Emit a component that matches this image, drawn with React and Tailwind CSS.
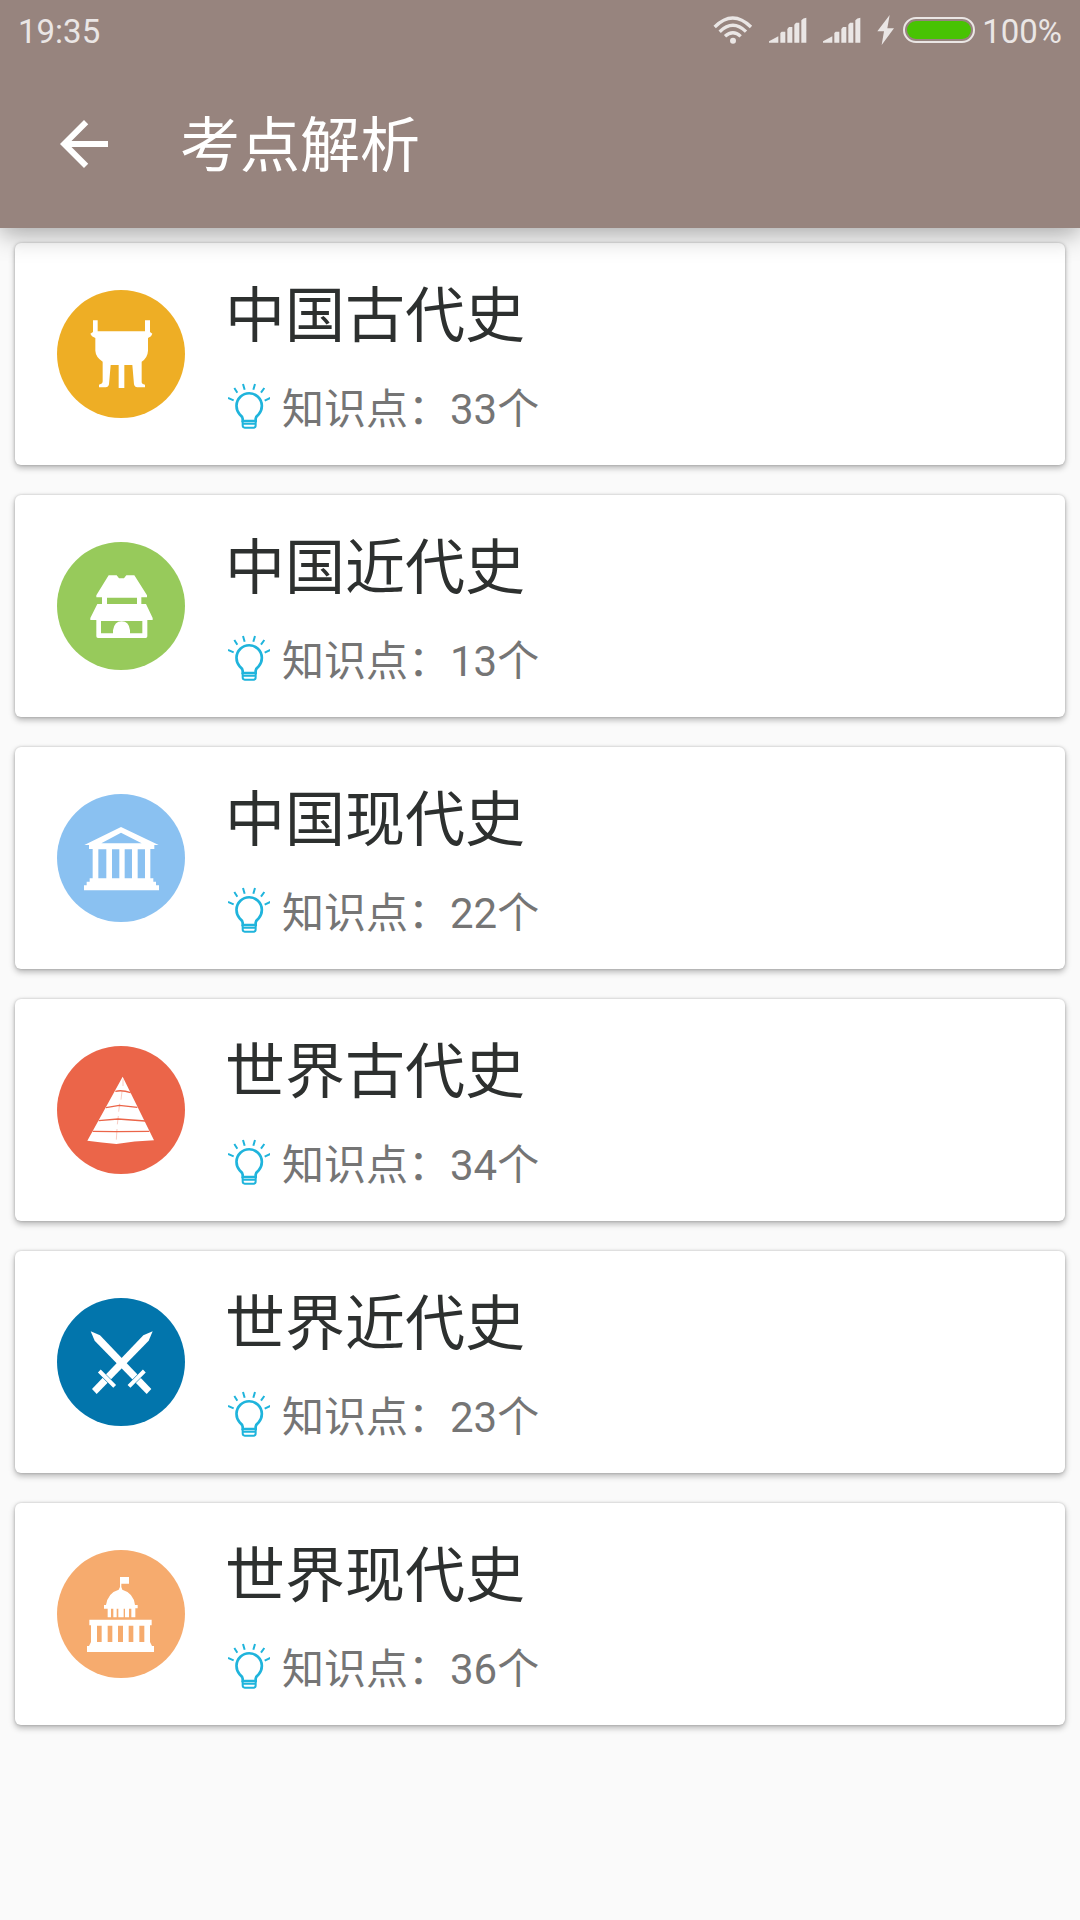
import React from "react";

const TripodIcon = () => (
  <svg viewBox="51 62 384 384" className="size-32 shrink-0" aria-hidden="true">
    <circle cx="243" cy="254" r="192" fill="#eeae25" />
    <path
      fill="#fff"
      d="M159 153h14v33h142v-33h15v35l7 5-4 8-9 5v38q-1 21-19 33v61q0 6 10 8v8h-23q-8 0-10-9l-5-58h-24v69h-17v-69h-24l-5 58q-2 9-10 9h-20v-8q11-2 11-10v-59q-21-14-22-33v-38l-10-5-5-8 8-5z"
    />
  </svg>
);

const PagodaIcon = () => (
  <svg viewBox="51 53 384 384" className="size-32 shrink-0" aria-hidden="true">
    <circle cx="243" cy="245" r="192" fill="#97ca5b" />
    <path
      fill="#fff"
      fillRule="evenodd"
      d="M206 153h24l7 9h15l7-9h24l38 60v6h-17v20h14l20 42v6h-16v49q0 5-5 5H174q-5 0-5-5v-49h-18v-6l21-42h14v-20h-17v-6zM201 220v19h90v-19zM183 290v37h36v-9q4-27 26-27t25 27v9h37v-37z"
    />
  </svg>
);

const TempleIcon = () => (
  <svg viewBox="51 44 384 384" className="size-32 shrink-0" aria-hidden="true">
    <circle cx="243" cy="236" r="192" fill="#8ac1f1" />
    <path
      fill="#fff"
      fillRule="evenodd"
      d="M243 143l113 54h-13v12h-12v88h9v10h8v11h9v15H132v-15h8v-11h9v-10h9v-88h-11v-12h-14zM243 160l-59 32h121zM175 210v87h24v-87zM216 210v87h22v-87zM254 210v87h22v-87zM293 210v87h22v-87z"
    />
  </svg>
);

const PyramidIcon = () => (
  <svg viewBox="51 45 384 384" className="size-32 shrink-0" aria-hidden="true">
    <circle cx="243" cy="237" r="192" fill="#eb6549" />
    <path fill="#fff" d="M248 137l94 191q-60 2-113 11-44-4-87-10z" />
    <g fill="none" stroke="#eb6549" strokeWidth="4">
      <path d="M226 181q20-5 46 4M198 230l40-7 54 6M176 269l58-5 82 6M158 301l70 1 100-1" />
      <path strokeWidth="1" d="M249 145v20M246 181l-3 25M239 218l-3 24M235 255l-3 25M231 294l-2 32" />
    </g>
  </svg>
);

const SwordsIcon = () => (
  <svg viewBox="51 41 384 384" className="size-32 shrink-0" aria-hidden="true">
    <circle cx="243" cy="233" r="192" fill="#0275ac" />
    <path fill="#fff" d="M152 141l28 12 154 161-14 15L164 169z" />
    <path fill="#fff" d="M338 141l-28 12-154 161 14 15 156-160z" />
    <path stroke="#0275ac" strokeWidth="15" d="M180 262l43 43M311 262l-43 43" />
    <path
      stroke="#fff"
      strokeWidth="12"
      d="M178 260l46 46M313 260l-46 46"
    />
  </svg>
);

const CapitolIcon = () => (
  <svg viewBox="51 48 384 384" className="size-32 shrink-0" aria-hidden="true">
    <circle cx="243" cy="240" r="192" fill="#f6ab6e" />
    <path
      fill="#fff"
      d="M240 129h27v20h-23v10l3 8q34 10 38 46h8v10h-7v27h-12v-26h-7v26h-12v-26h-4v26h-16v-26h-5v26h-10v-26h-7v26h-10v-26h-11v-11h6q6-37 38-46l4-8z"
    />
    <path
      fill="#fff"
      fillRule="evenodd"
      d="M148 257h187v17h-5v50l6 12h6v18H141v-18h6l6-12v-50h-5zM171 275v49h14v-49zM203 275v49h14v-49zM234 275v49h15v-49zM266 275v49h14v-49zM298 275v49h15v-49z"
    />
  </svg>
);

const BulbIcon = () => (
  <svg viewBox="54 340 126 138" className="h-[46px] w-[42px] shrink-0" aria-hidden="true">
    <g fill="none" stroke="#1fb4dc" strokeWidth="8">
      <path d="M98 454v-7q-1-7-9-13a38 38 0 1 1 57 0q-8 6-9 13v7z" />
      <path d="M98 454v13q0 7 6 7h27q6 0 6-7v-13M98 462h39" strokeWidth="6" />
      <path
        strokeWidth="6"
        d="M54 385l17 7M73 355l9 14M99 343l5 17M135 343l-5 17M163 355l-10 14M181 385l-17 8"
      />
    </g>
  </svg>
);

const WifiIcon = () => (
  <svg viewBox="36 46 120 84" className="h-7 w-10" aria-hidden="true">
    <g fill="none" stroke="currentColor" strokeWidth="10">
      <path d="M41 79q54-54 109 0" />
      <path d="M56 93q40-38 79 0" />
      <path d="M72 107q24-22 47 0" />
    </g>
    <circle cx="96" cy="120" r="9" fill="currentColor" />
  </svg>
);

const SignalIcon = () => (
  <svg viewBox="206 52 114 78" className="h-[26px] w-[38px]" aria-hidden="true">
    <path
      fill="currentColor"
      d="M206 129v-4l28-15v19zM240 129v-29l4-4h11v33zM261 129V88l5-6h10v47zM282 129V75l5-6h10v60zM303 129V62q5-8 15-8v75z"
    />
  </svg>
);

const BoltIcon = () => (
  <svg viewBox="535 45 54 90" className="h-[30px] w-[18px]" aria-hidden="true">
    <path fill="currentColor" d="M573 45l-37 49h20l-7 41 37-50h-20z" />
  </svg>
);

const BatteryIcon = () => (
  <svg viewBox="0 0 72 26" className="h-[26px] w-[72px]" aria-hidden="true">
    <rect x="1" y="1" width="70" height="24" rx="12" fill="none" stroke="currentColor" strokeWidth="2" />
    <rect x="4" y="4" width="64" height="18" rx="9" fill="#48c303" />
  </svg>
);

const chapters = [
  { name: "中国古代史", count: 33, Icon: TripodIcon },
  { name: "中国近代史", count: 13, Icon: PagodaIcon },
  { name: "中国现代史", count: 22, Icon: TempleIcon },
  { name: "世界古代史", count: 34, Icon: PyramidIcon },
  { name: "世界近代史", count: 23, Icon: SwordsIcon },
  { name: "世界现代史", count: 36, Icon: CapitolIcon },
];

function StatusBar() {
  return (
    <div className="flex h-15 items-center justify-between px-[18px] text-[33px] leading-10 text-[#eae6e5]">
      <span className="pt-[3px]">19:35</span>
      <div className="flex items-center">
        <div className="flex items-center gap-4">
          <WifiIcon />
          <SignalIcon />
          <SignalIcon />
          <BoltIcon />
        </div>
        <div className="ml-2 flex items-center gap-[7px]">
          <BatteryIcon />
          <span className="pt-[3px]">100%</span>
        </div>
      </div>
    </div>
  );
}

function ChapterCard({ name, count, Icon }) {
  return (
    <a
      href="#"
      className="flex items-center gap-10 rounded-md bg-white py-7 pr-6 pl-[42px] shadow-[0_3px_6px_rgba(0,0,0,0.28),0_0_3px_rgba(0,0,0,0.2)]"
    >
      <Icon />
      <div className="flex flex-col gap-7 pt-2">
        <h2 className="text-[60px] leading-[76px] text-[#2d302f]">{name}</h2>
        <p className="flex items-start gap-3 pl-[3px] text-[42px] leading-[54px] text-[#757575]">
          <BulbIcon />
          <span>知识点：{count}个</span>
        </p>
      </div>
    </a>
  );
}

export default function App() {
  return (
    <div className="min-h-screen bg-[#fafafa] font-['Roboto','Noto_Sans_CJK_SC',sans-serif]">
      <header className="relative z-10 bg-[#97847e] shadow-[0_6px_24px_rgba(0,0,0,0.34)]">
        <StatusBar />
        <div className="flex h-42 items-center gap-15 px-12 text-white">
          <button type="button" aria-label="返回">
            <svg viewBox="0 0 24 24" className="size-18" fill="currentColor" aria-hidden="true">
              <path d="M20 11H7.83l5.59-5.59L12 4l-8 8 8 8 1.41-1.41L7.83 13H20v-2z" />
            </svg>
          </button>
          <h1 className="pt-[6px] text-[60px] leading-[76px]">考点解析</h1>
        </div>
      </header>
      <main className="flex flex-col gap-[30px] p-[15px]">
        {chapters.map((chapter) => (
          <ChapterCard key={chapter.name} {...chapter} />
        ))}
      </main>
    </div>
  );
}
